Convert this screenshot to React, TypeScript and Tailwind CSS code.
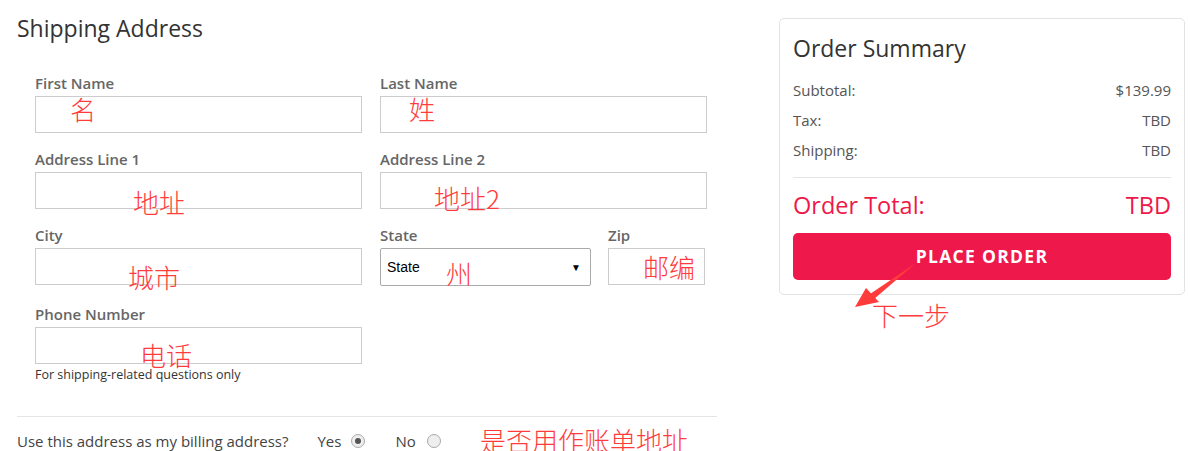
import React from "react";

const font = { fontFamily: '"Open Sans", "Noto Sans", sans-serif' };

function Field({ label, w, children }: { label: string; w: string; children?: React.ReactNode }) {
  return (
    <div className={`flex flex-col ${w}`}>
      <label className="text-[15px] leading-[20px] font-semibold text-[#666] mb-[3px]">{label}</label>
      {children ?? <div className="h-[37px] border border-[#ccc] bg-white" />}
    </div>
  );
}

function Note({ text, className }: { text: string; className: string }) {
  return (
    <span
      className={`absolute text-[26px] leading-none font-light text-[#ff3b3b] whitespace-nowrap pointer-events-none ${className}`}
      style={{ fontFamily: '"Noto Sans CJK SC", serif' }}
    >
      {text}
    </span>
  );
}

export default function App() {
  return (
    <div className="relative w-[1190px] h-[451px] bg-white overflow-hidden" style={font}>
      <div className="flex">
        {/* Left */}
        <div className="w-[717px] ml-[17px] pt-[13px]">
          <h1 className="text-[23px] leading-[30px] text-[#333]">Shipping Address</h1>
          <div className="pl-[18px] pt-[30px] flex flex-col">
            <div className="flex gap-[18px]">
              <Field label="First Name" w="w-[327px]" />
              <Field label="Last Name" w="w-[327px]" />
            </div>
            <div className="flex gap-[18px] mt-[16px]">
              <Field label="Address Line 1" w="w-[327px]" />
              <Field label="Address Line 2" w="w-[327px]" />
            </div>
            <div className="flex gap-[18px] mt-[16px]">
              <Field label="City" w="w-[327px]" />
              <div className="flex gap-[17px]">
                <Field label="State" w="w-[211px]">
                  <div className="h-[38px] border border-[#aaa] rounded-[2px] bg-white flex items-center justify-between pl-[6px] pr-[9px]">
                    <span className="text-[14px] text-black" style={{ fontFamily: '"Liberation Sans", Arial, sans-serif' }}>State</span>
                    <span className="text-[10px] text-black">▼</span>
                  </div>
                </Field>
                <Field label="Zip" w="w-[97px]" />
              </div>
            </div>
            <div className="flex mt-[18px]">
              <Field label="Phone Number" w="w-[327px]" />
            </div>
            <p className="text-[12.5px] leading-[16px] text-[#333] mt-[3px]">For shipping-related questions only</p>
          </div>
          <div className="border-t border-[#e5e5e5] mt-[33px] w-[700px]" />
          <div className="flex items-center h-[48px] text-[15px] text-[#444]">
            <span>Use this address as my billing address?</span>
            <span className="ml-[29px]">Yes</span>
            <span className="ml-[10px] w-[14px] h-[14px] rounded-full border border-[#aaa] bg-[#eee] flex items-center justify-center">
              <span className="w-[6px] h-[6px] rounded-full bg-[#555]" />
            </span>
            <span className="ml-[30px]">No</span>
            <span className="ml-[11px] w-[14px] h-[14px] rounded-full border border-[#aaa] bg-[#eee]" />
          </div>
        </div>

        {/* Right */}
        <div className="ml-[45px] mt-[18px] w-[406px] h-[277px] border border-[#e3e3e3] rounded-[5px] px-[13px] pt-[15px]">
          <h2 className="text-[23px] leading-[28px] text-[#333]">Order Summary</h2>
          <div className="mt-[13px] flex flex-col text-[15px] text-[#555]">
            <div className="flex justify-between h-[30px] items-center"><span>Subtotal:</span><span>$139.99</span></div>
            <div className="flex justify-between h-[30px] items-center"><span>Tax:</span><span>TBD</span></div>
            <div className="flex justify-between h-[30px] items-center"><span>Shipping:</span><span>TBD</span></div>
          </div>
          <div className="border-t border-[#e5e5e5] mt-[12px]" />
          <div className="flex justify-between items-center h-[55px] text-[23.5px] text-[#ee1849]">
            <span>Order Total:</span><span>TBD</span>
          </div>
          <button className="w-full h-[47px] rounded-[5px] bg-[#ef184b] text-white text-[17.5px] font-bold tracking-[1.3px]">
            PLACE ORDER
          </button>
        </div>
      </div>

      {/* annotations */}
      <Note text="名" className="left-[70px] top-[96px]" />
      <Note text="姓" className="left-[409px] top-[96px]" />
      <Note text="地址" className="left-[133px] top-[189px]" />
      <Note text="地址2" className="left-[434px] top-[185px]" />
      <Note text="城市" className="left-[128px] top-[264px]" />
      <Note text="州" className="left-[446px] top-[260px]" />
      <Note text="邮编" className="left-[643px] top-[254px]" />
      <Note text="电话" className="left-[140px] top-[342px]" />
      <Note text="是否用作账单地址" className="left-[480px] top-[427px]" />
      <Note text="下一步" className="left-[872px] top-[302px]" />
      <svg className="absolute left-[850px] top-[258px] pointer-events-none" width="70" height="55" viewBox="0 0 70 55">
        <path d="M66 5 L20 36 L24 41 Z" fill="#ff3b3b" />
        <path d="M5 49 L16 30 L29 44 Z" fill="#ff3b3b" />
      </svg>
    </div>
  );
}
